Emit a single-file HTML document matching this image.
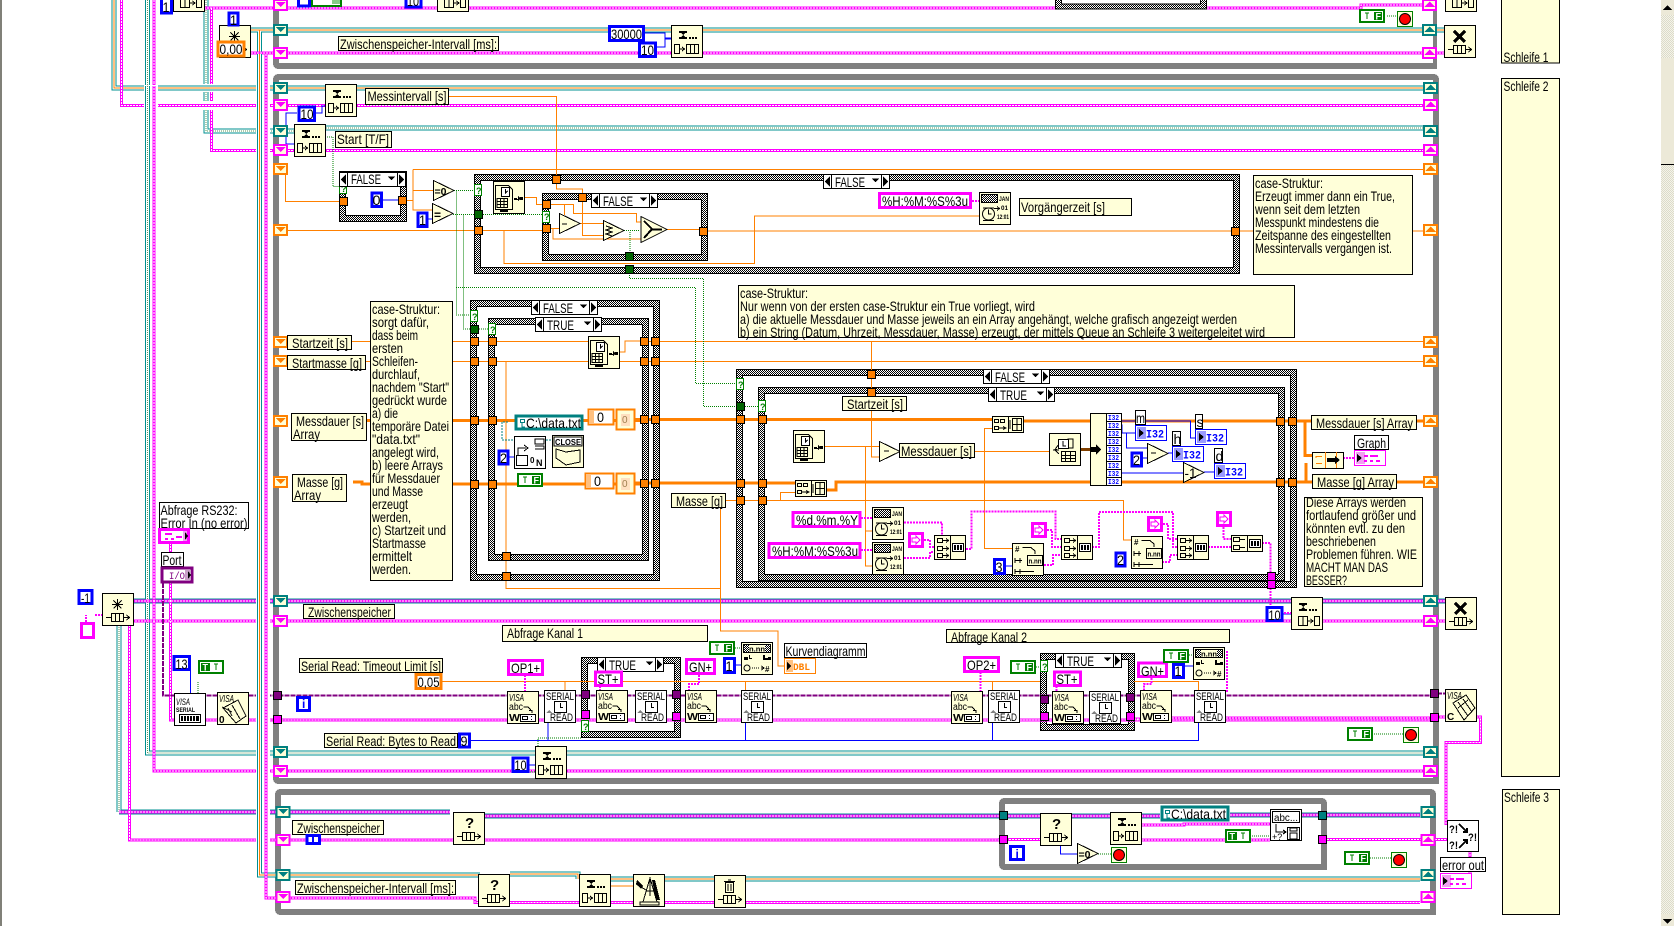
<!DOCTYPE html>
<html><head><meta charset="utf-8"><title>LabVIEW</title>
<style>
html,body{margin:0;padding:0;background:#fff;overflow:hidden}
svg{display:block;shape-rendering:crispEdges}
text{font:12px "Liberation Sans",sans-serif;fill:#000;stroke:none}
text:not([style]){font-size:14px;transform:translateY(1px)}
.y{fill:#ffffd9;stroke:#000}
.w{fill:#fff;stroke:#000}
.n{fill:none;stroke:#000}
.ho{fill:url(#h);stroke:#000}
.hi{fill:#fff;stroke:#000}
.cb{fill:#fff;stroke:#00f;stroke-width:3}
.cp{fill:#fff;stroke:#f0f;stroke-width:3}
.co{fill:#fff;stroke:#ff8000;stroke-width:3}
.ct{fill:#fff;stroke:#008080;stroke-width:3}
.wo{fill:none;stroke:#ff8000;stroke-width:1}
.wO{fill:none;stroke:#ff8000;stroke-width:3}
.wb{fill:none;stroke:#00f;stroke-width:1}
.wg{fill:none;stroke:#008000;stroke-width:1;stroke-dasharray:1 1}
.wu{fill:none;stroke:#800080;stroke-width:2;stroke-dasharray:5 1}
.wp{fill:none;stroke:#f0f;stroke-width:1;stroke-dasharray:2 1}
.fr{fill:#808080}
</style></head><body>
<svg xmlns="http://www.w3.org/2000/svg" width="1674" height="926" viewBox="0 0 1674 926">
<defs>
<pattern id="h" width="2" height="2" patternUnits="userSpaceOnUse"><rect width="2" height="2" fill="#fff"/><rect width="1" height="1" fill="#000"/><rect x="1" y="1" width="1" height="1" fill="#000"/></pattern>
<pattern id="sb" width="2" height="2" patternUnits="userSpaceOnUse"><rect width="2" height="2" fill="#f4f3ea"/><rect width="1" height="1" fill="#dcdbc8"/><rect x="1" y="1" width="1" height="1" fill="#dcdbc8"/></pattern>

<!-- wire geometry -->
<path id="P" fill="none" d="M198 8H1055M1207 8H1361V5H1423M251 53H1444M121.500 0V105.500H1423M154 0V771H1423M211.500 8V150.500H1423M266 54V898H475V902.500H1420M132 621H1445M129.500 625V840H1000V839.500H1040M170.500 543V720H1431M1437 717H1480.500V742.500H1446V825M1327 839.500H1447M1142 840H1270M1142 825H1184V824H1270M1470 851V873M678 720H1040M1134 719H1141M1172 718H1431"/>
<path id="TO" fill="none" d="M114 0V88H1423M250 30H1445M259.500 30V875H480M578 879V874H510M664 879H1420M610 879H634"/>
<path id="TD" fill="none" d="M147.500 0V753H1423M206 0V131H295M326 128H1423"/>
<path id="TP" fill="none" d="M132 601H1445M119 812H450M484 816H1000M1008 816H1040M1072 816H1160M1230 815H1270M1301 815H1318M1327 815H1420"/>
<path id="T" fill="none" d="M119 625V812"/>
<path id="VO" fill="none" d="M259.500 54V873"/>
<path id="VP" fill="none" d="M266 54V873M154 82V110"/>
<path id="VD" fill="none" d="M147.500 82V110"/>
<path id="HO" fill="none" d="M202 88H215"/>
<path id="HP" fill="none" d="M202 105.500H215"/>

<!-- structure pieces -->
<rect id="s" x=".5" y=".5" width="8" height="8" stroke="#000"/>
<g id="sd"><rect x="1" y="1" width="13" height="10" fill="#ffffd9" stroke="currentColor" stroke-width="2"/><path d="M2.500 3H12.500L7.500 8Z" fill="currentColor"/></g>
<g id="su"><rect x="1" y="1" width="13" height="10" fill="#ffffd9" stroke="currentColor" stroke-width="2"/><path d="M2 8H13L7.500 2.500Z" fill="currentColor"/></g>
<g id="sel"><rect x=".5" y=".5" width="66" height="14" class="w"/><path class="n" d="M8.500 0V14M58.500 0V14"/><path d="M1.500 7.500L7 2.500V12.500ZM65.500 7.500L60 2.500V12.500ZM49 4.500H56L52.500 8.500Z"/></g>
<path id="qm" fill="#fff" stroke="#008000" d="M.5 .5H7.500V11.500H.5Z"/>

<!-- common node art -->
<rect id="b" x=".5" y=".5" width="31" height="32" class="y"/>
<path id="ql" class="n" d="M4 24.500H9M9.500 20.500H21.500V28.500H9.500ZM13.500 20.500V28.500M17.500 20.500V28.500M21.500 24.500H27M24.500 22L27.500 24.500L24.500 27"/>
<g id="hg"><path fill="#000" d="M8 6H16V8H14L12 10L14 12H16V14H8V12H10L12 10L10 8H8Z"/><rect x="18" y="12" width="2" height="2"/><rect x="21" y="12" width="2" height="2"/><rect x="24" y="12" width="2" height="2"/></g>
<g id="qe"><use href="#b"/><use href="#hg"/><path class="n" d="M7.500 19.500H16.500V28.500H7.500ZM12 19.500V28.500M16.500 24H21.500M19.500 22L22 24L19.500 26M23.500 19.500H28.500V28.500H23.500Z"/></g>
<g id="qd"><use href="#b"/><use href="#hg"/><path class="n" d="M3.500 19.500H8.500V28.500H3.500ZM8.500 24H13M11 22L13.500 24L11 26M15.500 19.500H27.500V28.500H15.500ZM19.500 19.500V28.500M23.500 19.500V28.500"/></g>
<g id="qa"><use href="#b"/><use href="#ql"/><path fill="none" stroke="#000" stroke-width="1" d="M15.500 6V17M10 11.500H21M11.500 7.500L19.500 15.500M19.500 7.500L11.500 15.500"/></g>
<g id="qx"><use href="#b"/><use href="#ql"/><path fill="none" stroke="#000" stroke-width="3" d="M10 6L21 17M21 6L10 17"/></g>
<g id="qq"><use href="#b"/><use href="#ql"/><text x="12" y="16" style="font:bold 15px 'Liberation Sans',sans-serif">?</text></g>
<g id="qr"><use href="#b"/><use href="#ql"/><path class="n" d="M11.500 7.500H19.500V17.500H11.500ZM10 6.500H21M14 5H17M14 9V16M17 9V16"/></g>
<g id="clk"><use href="#b"/><path class="y" d="M2.500 4.500H15.500L19.500 8.500V28.500H2.500Z"/><path fill="#fff" stroke="#000" d="M8.500 6.500H16.500V15.500H8.500Z"/><path class="n" d="M12.500 8V12L14.500 10M4 17.500H14.500V26.500H4ZM7.500 17.500V26.500M11 17.500V26.500M4 20.500H14.500M4 23.500H14.500"/><path d="M7 29H15V31H7ZM21 17H24V18H25V15L28 17.500L25 20V19H21ZM27 16H30V19H27Z" fill="#000"/></g>
<g id="dt"><use href="#b"/><rect x="2.500" y="2.500" width="16" height="8" fill="url(#h)" stroke="#000"/><circle cx="9.500" cy="22" r="6" fill="#ffffd9" stroke="#000" style="shape-rendering:auto"/><path class="n" d="M9.500 17.500V22H12.500M4 16H15M4 28.500H15M15 16.500H20M18 14.500L20.500 16.500L18 18.500"/><text x="20" y="9" textLength="10" lengthAdjust="spacingAndGlyphs" style="font:bold 6px 'Liberation Sans',sans-serif">JAN</text><text x="22" y="18" textLength="7" lengthAdjust="spacingAndGlyphs" style="font:bold 6px 'Liberation Sans',sans-serif">01</text><text x="18" y="27" textLength="12" lengthAdjust="spacingAndGlyphs" style="font:bold 6px 'Liberation Sans',sans-serif">12:01</text></g>
<g id="ser"><rect x=".5" y=".5" width="31" height="32" class="w"/><text x="2" y="10" textLength="28" lengthAdjust="spacingAndGlyphs" style="font:11px 'Liberation Sans',sans-serif">SERIAL</text><text x="6" y="31" textLength="23" lengthAdjust="spacingAndGlyphs" style="font:11px 'Liberation Sans',sans-serif">READ</text><rect x="10.500" y="11.500" width="12" height="11" class="w"/><path class="n" d="M16.500 13V17.500H19M16.500 11V12M16.500 22V23"/><path fill="#808080" d="M2 23L5 20L8 23Z"/></g>
<g id="vw"><use href="#b"/><text x="2" y="10" textLength="15" lengthAdjust="spacingAndGlyphs" style="font:italic 10px 'Liberation Sans',sans-serif">VISA</text><text x="2" y="19" textLength="14" lengthAdjust="spacingAndGlyphs" style="font:10px 'Liberation Sans',sans-serif">abc</text><path class="n" d="M16.500 16H21L24 19M22 19.500H25V22"/><text x="2" y="30" textLength="11" lengthAdjust="spacingAndGlyphs" style="font:bold 10px 'Liberation Sans',sans-serif">W</text><rect x="13.500" y="23.500" width="15" height="7" class="w"/><path class="n" d="M15.500 25.500H20.500V28.500H15.500ZM24.500 25V26M24.500 28V29"/></g>
<g id="cc"><rect x=".5" y=".5" width="31" height="24" class="y"/><path class="n" d="M16.500 0V24M3.500 3.500H8.500V7.500H3.500ZM3.500 11.500H8.500V15.500H3.500ZM3.500 18.500H8.500V22.500H3.500ZM9 5.500H14M12 3.500L14.500 5.500L12 7.500M9 13.500H14M12 11.500L14.500 13.500L12 15.500M9 20.500H14M12 18.500L14.500 20.500L12 22.500"/><rect x="18.500" y="8.500" width="11" height="8" class="w"/><path d="M20 10H22V15H20ZM23 10H25V15H23ZM26 10H28V15H26Z"/></g>
<g id="ab"><rect x=".5" y=".5" width="31" height="16" class="y"/><path class="n" d="M16.500 0V16M2.500 3.500H6.500V6.500H2.500ZM8.500 3.500H12.500V6.500H8.500ZM2.500 10.500H6.500V13.500H2.500ZM7 12H13M11 10.500L14 12L11 13.500M20.500 2.500H29.500V14.500H20.500ZM25 2.500V14.500M20.500 8.500H29.500M18 4V13"/></g>
<g id="fn"><use href="#b"/><text x="3" y="9" style="font:bold 8px 'Liberation Sans',sans-serif">#</text><path class="n" d="M10.500 4.500H19L23 8V11M3 17.500H10M3 15V20M8 15V20M3 28.500H22M3 26V31M8 26V31"/><rect x="15.500" y="12.500" width="15" height="10" class="y"/><text x="16.500" y="20.500" textLength="13" lengthAdjust="spacingAndGlyphs" style="font:bold 7px 'Liberation Sans',sans-serif">n.nn</text></g>
<g id="ee"><use href="#b"/><rect x="2.500" y="2.500" width="27" height="8" fill="url(#h)" stroke="#000"/><rect x="8" y="3" width="16" height="7" fill="#ffffd9"/><text x="8" y="9.500" textLength="16" lengthAdjust="spacingAndGlyphs" style="font:bold 7px 'Liberation Sans',sans-serif">n.nn</text><path d="M3 15H7V18H3ZM8 13H9V16H11V17H8ZM22 13H24V16H27V15H30V18H22Z"/><circle cx="6" cy="26" r="3" fill="none" stroke="#000" style="shape-rendering:auto"/><path class="wg" style="stroke:#000" d="M11 26H19"/><path class="n" d="M20 26H22M20.500 24L23 26L20.500 28"/><text x="24" y="30" style="font:bold 8px 'Liberation Sans',sans-serif">#</text></g>
<g id="bf"><rect x="1" y="1" width="24" height="12" fill="#fff" stroke="#008000" stroke-width="2"/><rect x="15" y="3" width="8" height="8" fill="#008000"/><path class="n" style="stroke:#008000" d="M6 4H10M8 4V10"/><text x="16.500" y="10.500" style="font:bold 9px 'Liberation Sans',sans-serif;fill:#fff">F</text></g>
<g id="bt"><rect x="1" y="1" width="24" height="12" fill="#fff" stroke="#008000" stroke-width="2"/><rect x="3" y="3" width="9" height="8" fill="#008000"/><path class="n" style="stroke:#008000" d="M16 4H20M18 4V10"/><text x="4.500" y="10.500" style="font:bold 9px 'Liberation Sans',sans-serif;fill:#fff">T</text></g>
<g id="stop"><rect x=".5" y=".5" width="15" height="15" fill="#ffffd9" stroke="#008000"/><circle cx="8" cy="8" r="5.500" fill="#f00" stroke="#000" style="shape-rendering:auto"/></g>
<g id="i32"><rect x=".5" y=".5" width="31" height="15" fill="#fff" stroke="#00f"/><rect x="2" y="2" width="9" height="12" fill="#9a9aff"/><path d="M4 4L9 8L4 12Z"/><text x="11" y="12.500" textLength="18" lengthAdjust="spacingAndGlyphs" style="font:bold 11px 'Liberation Mono',monospace;fill:#00f">I32</text></g>
<g id="cl"><rect x=".5" y=".5" width="31" height="15" fill="#fff" stroke="#f0f"/><rect x="2" y="2" width="9" height="12" fill="#f0a0f0"/><path d="M3 4L8 8L3 12Z"/><path fill="#f0f" stroke="none" d="M10 5H14V7H10ZM16 5H24V7H16ZM10 10H13V12H10ZM16 10H19V12H16ZM22 10H26V12H22Z"/></g>
<g id="pb"><rect x="1.500" y="1.500" width="13" height="13" fill="#fff" stroke="#f0f" stroke-width="3"/><path fill="none" stroke="#f0f" d="M4 6H8V4L12 8L8 12V10H4Z"/></g>
<g id="tri"><path d="M.5 .5L21 10.500L.5 20.500Z" class="y"/></g>
</defs>

<rect width="1674" height="926" fill="#fff"/>
<rect x="0" y="0" width="2" height="926" fill="#808078"/>

<!-- while loop frames -->
<path class="fr" d="M273 0H279V63H1433V0H1437V69H279Q273 69 273 63Z"/>
<path class="fr" d="M279 74H1433Q1439 74 1439 80V784H279Q273 784 273 778V80Q273 74 279 74ZM279 80V778H1433V80Z" fill-rule="evenodd"/>
<path class="fr" d="M281 789H1430Q1436 789 1436 795V915H281Q275 915 275 909V795Q275 789 281 789ZM281 795V909H1430V795Z" fill-rule="evenodd"/>
<path class="fr" d="M1005 798H1321Q1327 798 1327 804V870H1005Q999 870 999 864V804Q999 798 1005 798ZM1005 804V864H1321V804Z" fill-rule="evenodd"/>

<!-- case structures -->
<rect class="ho" x="1055.500" y="-6" width="151" height="15"/><rect class="hi" x="1061.500" y="-8" width="139" height="12"/>
<rect class="ho" x="339.500" y="171.500" width="67" height="50"/><rect class="hi" x="345.500" y="186.500" width="55" height="29"/>
<rect class="ho" x="474.500" y="174.500" width="765" height="99"/><rect class="hi" x="480.500" y="180.500" width="753" height="87"/>
<rect class="ho" x="542.500" y="193.500" width="165" height="67"/><rect class="hi" x="548.500" y="199.500" width="153" height="55"/>
<rect class="ho" x="470.500" y="300.500" width="189" height="280"/><rect class="hi" x="476.500" y="306.500" width="177" height="268"/>
<rect class="ho" x="488.500" y="318.500" width="160" height="242"/><rect class="hi" x="494.500" y="324.500" width="148" height="230"/>
<rect class="ho" x="736.500" y="369.500" width="560" height="218"/><rect class="hi" x="742.500" y="375.500" width="548" height="206"/>
<rect class="ho" x="758.500" y="387.500" width="526" height="193"/><rect class="hi" x="764.500" y="393.500" width="514" height="181"/>
<rect class="ho" x="581.500" y="657.500" width="99" height="80"/><rect class="hi" x="587.500" y="663.500" width="87" height="68"/>
<rect class="ho" x="1040.500" y="653.500" width="94" height="77"/><rect class="hi" x="1046.500" y="659.500" width="82" height="65"/>

<!-- data wires: dotted bundles -->
<g stroke-width="5" stroke="#009090"><use href="#TO"/><use href="#TD"/><use href="#TP"/><use href="#T"/></g>
<g stroke-width="3" stroke="#fff"><use href="#TO"/><use href="#TD"/><use href="#T"/></g>
<g stroke-width="1" stroke="#ff8000"><use href="#TO"/></g>
<g stroke-width="1" stroke="#5a9a5a" stroke-dasharray="1 1"><use href="#TD"/><use href="#T"/></g>
<g stroke-width="3" stroke="#f0f"><use href="#P"/><use href="#TP"/></g>
<g stroke-width="1" stroke="#fff" stroke-dasharray="2 1"><use href="#P"/><use href="#TP"/></g>

<!-- purple VISA wire -->
<path class="wu" d="M163 583V695.500H1431M1437 693.500H1446"/>

<!-- wire crossing gaps -->
<rect x="256" y="56" width="14" height="816" fill="#fff"/>
<rect x="144" y="84" width="14" height="8" fill="#fff"/><rect x="144" y="101" width="14" height="9" fill="#fff"/>
<rect x="203" y="84" width="11" height="8" fill="#fff"/><rect x="203" y="101" width="11" height="9" fill="#fff"/>
<g stroke-width="5" stroke="#009090"><use href="#VO"/><use href="#VD"/><use href="#HO"/></g>
<g stroke-width="3" stroke="#fff"><use href="#VO"/><use href="#VD"/><use href="#HO"/></g>
<g stroke-width="1" stroke="#ff8000"><use href="#VO"/><use href="#HO"/></g>
<g stroke-width="1" stroke="#5a9a5a" stroke-dasharray="1 1"><use href="#VD"/></g>
<g stroke-width="3" stroke="#f0f"><use href="#VP"/><use href="#HP"/></g>
<g stroke-width="1" stroke="#fff" stroke-dasharray="2 1"><use href="#VP"/><use href="#HP"/></g>
<rect x="144" y="85" width="14" height="1" fill="#fff"/>

<!-- thin/thick orange -->
<path class="wO" d="M353 482H362V484H470M366 420.500H470M479 420.500H640M479 484H640M634 419.500H736M634 483H736M745 419.500H992M745 483H795M827 490H836V482H1090M1024 421H1090M1100 421H1276M1100 482H1276M1285 421H1311M1285 482H1312M1305 421V455.500H1312M1306 463V482M1417 421H1423M1397 482H1423"/>
<path class="wo" d="M285.500 170V201.500H339M407 200.500H413M413 169.500V210H432M413 190.500H433M413 169.500H1423M448 96.500H556.500V175M288 230.500H474M483 230.500H542M504 230.500V263.500H754.500V216H979M708 231H1231M1240 231H1423M352 341.500H470M366 361.500H470M479 341.500H488M479 361.500H488M497 341.500H588M497 361.500H640M506 361V588.500H720.500M720.500 508V631H778V666H816M619 352H625V341H640M649 341.500H1423M649 361.500H1423M871.500 341.500V457H879M824 446.500H879M865.500 446.500V566H872M865 531H872M974 451.500H1049M984.500 428.500V548.500H1012M992 428.500H984M726 500.500H1123.500V540H1131M780.500 500.500V492.500H795M442 681.500H1040M1134 681.500H1198.500V690M745.500 681.500V690M992.500 681.500V690M565 681.500V690M680 681.500H685M610 886H633"/>
<path class="wo" d="M556.500 182V189H582.500V193M582.500 201V235.500H603M525 197.500H536.500V204.500H542.500M550 204.500H573.500V213.500H636.500V222H641M564.500 204.500V215M550 228.500H559M553 228.500V239H641M580 223.500H603M667 229.500H699"/>

<!-- blue wires -->
<path class="wb" d="M316 113H322V106H326M297 113H286V144H294M286 144H296M382 200H398M428 219H433M509 457H514M190.500 671V693M470 740.500H1198.500V722M548 740V722M745.500 740V722M992.500 740V722M1060.500 845V854H1077M529 765H535M656 47H665V39H671M645 33H665V38H671M1006 566H1012M1106 421H1190.500V438H1195M1106 425H1122V433H1135M1106 433H1126.500V448H1147M1106 473H1183M1142 458H1147M1168 453H1172M1204 472H1214M736 665H741M1185 666H1193M1133 559H1131M1283 614H1291"/>

<!-- green dotted -->
<path class="wg" d="M325 137H333V186.500H339M454 190.500H474M456.500 190.500V315H470M453 214.500H542M463.500 214.500V329H488M456 287.500H695.500V383.500H736M629.500 273V278.500H703.500V406.500H736M745 406.500H758M630 232V252M624 230.500H640M1387 16H1397M1372 734H1403M1370 858H1391M1250 836H1270M1098 854H1111M1036 667H1040M735 648H741M1189 655H1193M530 772H538V738H581M198 682V693"/>

<!-- small pink dotted wires -->
<path class="wp" style="stroke-width:2" d="M95 615H102M86 622V615M861 518H872M861 550H872M904 522.500H942V535M904 558H930V552H934M924 540H930V547H934M966 549H971.500V511.500H1055.500V539H1061M1044 565H1053V555H1061M1047 530H1052V547H1061M1092 547H1099V512H1173V547H1177M1162 562H1170V555H1177M1163 524H1168V539H1177M1208 547H1231M1223.500 527V539H1231M1262 543H1270.500V573M1270.500 588V606M1266 613H1291M1343 458H1354M1227 651V692M525 675V691M699 675V684H689V690M980.500 672V691M1151.500 678V684H1144V690M600 686V690M1056.500 686V691M972 201H979"/>

<!-- SR terminals -->
<g>
<use href="#sd" x="273" y="-1" color="#f0f"/><use href="#sd" x="273" y="24" color="#008080"/><use href="#sd" x="273" y="47" color="#f0f"/>
<use href="#sd" x="273" y="82" color="#008080"/><use href="#sd" x="273" y="99" color="#f0f"/><use href="#sd" x="273" y="125" color="#008080"/><use href="#sd" x="273" y="144" color="#f0f"/><use href="#sd" x="273" y="163" color="#ff8000"/><use href="#sd" x="273" y="224" color="#ff8000"/><use href="#sd" x="273" y="336" color="#ff8000"/><use href="#sd" x="273" y="355" color="#ff8000"/><use href="#sd" x="273" y="415" color="#ff8000"/><use href="#sd" x="273" y="476" color="#ff8000"/><use href="#sd" x="273" y="595" color="#008080"/><use href="#sd" x="273" y="615" color="#f0f"/><use href="#sd" x="273" y="746" color="#008080"/><use href="#sd" x="273" y="765" color="#f0f"/>
<use href="#sd" x="275.500" y="806" color="#008080"/><use href="#sd" x="275.500" y="834" color="#f0f"/><use href="#sd" x="275.500" y="869" color="#008080"/><use href="#sd" x="275.500" y="891" color="#f0f"/>
<use href="#su" x="1422" y="-1" color="#f0f"/><use href="#su" x="1422" y="24" color="#008080"/><use href="#su" x="1422" y="47" color="#f0f"/>
<use href="#su" x="1423" y="82" color="#008080"/><use href="#su" x="1423" y="99" color="#f0f"/><use href="#su" x="1423" y="125" color="#008080"/><use href="#su" x="1423" y="144" color="#f0f"/><use href="#su" x="1423" y="163" color="#ff8000"/><use href="#su" x="1423" y="224" color="#ff8000"/><use href="#su" x="1423" y="336" color="#ff8000"/><use href="#su" x="1423" y="355" color="#ff8000"/><use href="#su" x="1423" y="415" color="#ff8000"/><use href="#su" x="1423" y="476" color="#ff8000"/><use href="#su" x="1423" y="595" color="#008080"/><use href="#su" x="1423" y="615" color="#f0f"/><use href="#su" x="1423" y="746" color="#008080"/><use href="#su" x="1423" y="765" color="#f0f"/>
<use href="#su" x="1420.500" y="806" color="#008080"/><use href="#su" x="1420.500" y="834" color="#f0f"/><use href="#su" x="1420.500" y="869" color="#008080"/><use href="#su" x="1420.500" y="891" color="#f0f"/>
</g>

<!-- square tunnels -->
<g fill="#ff8000">
<use href="#s" x="339" y="197"/><use href="#s" x="398" y="196"/><use href="#s" x="474" y="226"/><use href="#s" x="552" y="175"/><use href="#s" x="578" y="193"/><use href="#s" x="542" y="200"/><use href="#s" x="542" y="224"/><use href="#s" x="699" y="227"/><use href="#s" x="1231" y="227"/>
<use href="#s" x="470" y="337"/><use href="#s" x="470" y="357"/><use href="#s" x="470" y="416"/><use href="#s" x="470" y="480"/><use href="#s" x="488" y="337"/><use href="#s" x="488" y="357"/><use href="#s" x="488" y="416"/><use href="#s" x="488" y="480"/><use href="#s" x="502" y="552"/><use href="#s" x="502" y="572"/>
<use href="#s" x="640" y="337"/><use href="#s" x="640" y="357"/><use href="#s" x="640" y="415"/><use href="#s" x="640" y="479"/><use href="#s" x="651" y="337"/><use href="#s" x="651" y="357"/><use href="#s" x="651" y="415"/><use href="#s" x="651" y="479"/>
<use href="#s" x="867" y="370"/><use href="#s" x="867" y="388"/><use href="#s" x="736" y="415"/><use href="#s" x="736" y="479"/><use href="#s" x="736" y="496"/><use href="#s" x="758" y="415"/><use href="#s" x="758" y="479"/><use href="#s" x="758" y="496"/>
<use href="#s" x="1276" y="417"/><use href="#s" x="1276" y="478"/><use href="#s" x="1288" y="417"/><use href="#s" x="1288" y="478"/>
</g>
<g fill="#006400"><use href="#s" x="474" y="210"/><use href="#s" x="625" y="252"/><use href="#s" x="625" y="265"/><use href="#s" x="470" y="325"/><use href="#s" x="736" y="402"/></g>
<g fill="#800080"><use href="#s" x="273" y="691"/><use href="#s" x="1430" y="689"/><use href="#s" x="581" y="690"/><use href="#s" x="672" y="690"/><use href="#s" x="1040" y="695"/><use href="#s" x="1126" y="693"/></g>
<g fill="#f0f"><use href="#s" x="273" y="715"/><use href="#s" x="1430" y="713"/><use href="#s" x="581" y="710"/><use href="#s" x="672" y="712"/><use href="#s" x="1040" y="712"/><use href="#s" x="1126" y="712"/><use href="#s" x="1267" y="572"/><use href="#s" x="1267" y="580"/><use href="#s" x="999" y="835"/><use href="#s" x="1318" y="835"/></g>
<g fill="#008080"><use href="#s" x="999" y="811"/><use href="#s" x="1318" y="811"/></g>
<!-- selector terminals -->
<use href="#qm" x="339" y="182"/><use href="#qm" x="474" y="184"/><use href="#qm" x="542" y="211"/><use href="#qm" x="470" y="310"/><use href="#qm" x="488" y="323"/><use href="#qm" x="736" y="378"/><use href="#qm" x="758" y="400"/><use href="#qm" x="581" y="720"/><use href="#qm" x="1040" y="660"/>
<g style="font:9px 'Liberation Sans',sans-serif;"><text x="341" y="192" style="font:bold 9px 'Liberation Sans',sans-serif;fill:#008000">?</text><text x="476" y="194" style="font:bold 9px 'Liberation Sans',sans-serif;fill:#008000">?</text><text x="544" y="220" style="font:bold 9px 'Liberation Sans',sans-serif;fill:#008000">?</text><text x="472" y="320" style="font:bold 9px 'Liberation Sans',sans-serif;fill:#008000">?</text><text x="490" y="333" style="font:bold 9px 'Liberation Sans',sans-serif;fill:#008000">?</text><text x="738" y="388" style="font:bold 9px 'Liberation Sans',sans-serif;fill:#008000">?</text><text x="760" y="410" style="font:bold 9px 'Liberation Sans',sans-serif;fill:#008000">?</text><text x="583" y="730" style="font:bold 9px 'Liberation Sans',sans-serif;fill:#008000">?</text><text x="1042" y="670" style="font:bold 9px 'Liberation Sans',sans-serif;fill:#008000">?</text></g>

<!-- selectors -->
<use href="#sel" x="339" y="172"/><text x="351" y="183" textLength="30" lengthAdjust="spacingAndGlyphs">FALSE</text>
<use href="#sel" x="823" y="174"/><text x="835" y="186" textLength="30" lengthAdjust="spacingAndGlyphs">FALSE</text>
<use href="#sel" x="591" y="193"/><text x="603" y="205" textLength="30" lengthAdjust="spacingAndGlyphs">FALSE</text>
<use href="#sel" x="531" y="300"/><text x="543" y="312" textLength="30" lengthAdjust="spacingAndGlyphs">FALSE</text>
<use href="#sel" x="535" y="317"/><text x="547" y="329" textLength="27" lengthAdjust="spacingAndGlyphs">TRUE</text>
<use href="#sel" x="983" y="369"/><text x="995" y="381" textLength="30" lengthAdjust="spacingAndGlyphs">FALSE</text>
<use href="#sel" x="988" y="387"/><text x="1000" y="399" textLength="27" lengthAdjust="spacingAndGlyphs">TRUE</text>
<use href="#sel" x="597" y="657"/><text x="609" y="669" textLength="27" lengthAdjust="spacingAndGlyphs">TRUE</text>
<use href="#sel" x="1055" y="653"/><text x="1067" y="665" textLength="27" lengthAdjust="spacingAndGlyphs">TRUE</text>

<!-- top strip nodes -->
<use href="#qe" x="173" y="-21"/>
<rect class="cb" x="161.500" y="-3" width="10" height="16"/><text x="162.500" y="11" textLength="7" lengthAdjust="spacingAndGlyphs">1</text>
<use href="#qe" x="437" y="-21"/>
<rect class="cb" x="406" y="-8" width="15" height="15"/><text x="407" y="5" textLength="12" lengthAdjust="spacingAndGlyphs">10</text>
<rect class="cb" x="298.500" y="-5" width="11" height="11"/>
<rect x="312" y="-6" width="29" height="12" fill="#fff" stroke="#008000" stroke-width="2"/><rect x="332" y="-4" width="8" height="8" fill="#8c8"/>
<use href="#qa" x="219" y="25"/>
<rect class="cb" x="229" y="13" width="9" height="12"/><text x="230" y="24" textLength="7" lengthAdjust="spacingAndGlyphs">1</text>
<rect class="co" x="218" y="42" width="26" height="14"/><text x="219.500" y="53" textLength="23" lengthAdjust="spacingAndGlyphs">0,00</text>
<rect class="y" x="338.500" y="36.500" width="160" height="14"/><text x="340" y="48" textLength="157" lengthAdjust="spacingAndGlyphs">Zwischenspeicher-Intervall [ms]:</text>
<use href="#qd" x="671" y="25"/>
<rect class="cb" x="609.500" y="26.500" width="34" height="14"/><text x="611" y="38" textLength="31" lengthAdjust="spacingAndGlyphs">30000</text>
<rect class="cb" x="639.500" y="43" width="16" height="13.500"/><text x="641" y="54" textLength="13" lengthAdjust="spacingAndGlyphs">10</text>
<use href="#bf" x="1359" y="9"/><use href="#stop" x="1397" y="11"/>
<use href="#qe" x="1445" y="-21"/><use href="#qx" x="1444" y="25"/>

<!-- loop 2 upper nodes -->
<use href="#qd" x="325" y="84"/>
<rect class="y" x="365.500" y="88.500" width="83" height="16"/><text x="367.500" y="100" textLength="79" lengthAdjust="spacingAndGlyphs">Messintervall [s]</text>
<rect class="cb" x="299" y="107" width="15.500" height="13.500"/><text x="300.500" y="118" textLength="13" lengthAdjust="spacingAndGlyphs">10</text>
<use href="#qd" x="294" y="124"/>
<rect class="y" x="335.500" y="131.500" width="56" height="16"/><text x="337" y="143" textLength="52" lengthAdjust="spacingAndGlyphs">Start [T/F]</text>
<rect class="cb" x="372" y="193" width="9.500" height="13.500"/><text x="372.500" y="204" textLength="8" lengthAdjust="spacingAndGlyphs">0</text>
<use href="#tri" x="433" y="180"/><text x="434.500" y="195" style="font:bold 10px 'Liberation Sans',sans-serif" textLength="12" lengthAdjust="spacingAndGlyphs">=0</text>
<use href="#tri" x="432" y="203"/><text x="434" y="219" style="font:bold 12px 'Liberation Sans',sans-serif">=</text>
<rect class="cb" x="418" y="213" width="9" height="13.500"/><text x="419" y="224" textLength="7" lengthAdjust="spacingAndGlyphs">1</text>
<use href="#clk" x="493" y="181"/>
<use href="#tri" x="559" y="213"/><path class="n" d="M562 224H567"/>
<use href="#tri" x="603" y="220"/><path class="n" d="M606 226L612 228L606 230L612 232L606 234L612 236"/>
<path class="y" d="M641 216.500L667 229.500L641 242.500Z"/><path fill="none" stroke="#000" stroke-width="2" d="M644 221L652 229L644 238M652 229.500H662"/>
<rect class="cp" x="879.500" y="193.500" width="91" height="14"/><text x="882" y="205" textLength="86" lengthAdjust="spacingAndGlyphs">%H:%M:%S%3u</text>
<use href="#dt" x="979" y="192"/>
<rect class="y" x="1019.500" y="198.500" width="112" height="17"/><text x="1021" y="211" textLength="84" lengthAdjust="spacingAndGlyphs">Vorgängerzeit [s]</text>

<!-- notes -->
<rect class="y" x="1253.500" y="175.500" width="159" height="99"/>
<g><text x="1255" y="187" textLength="68" lengthAdjust="spacingAndGlyphs">case-Struktur:</text><text x="1255" y="200" textLength="140" lengthAdjust="spacingAndGlyphs">Erzeugt immer dann ein True,</text><text x="1255" y="213" textLength="105" lengthAdjust="spacingAndGlyphs">wenn seit dem letzten</text><text x="1255" y="226" textLength="124" lengthAdjust="spacingAndGlyphs">Messpunkt mindestens die</text><text x="1255" y="239" textLength="136" lengthAdjust="spacingAndGlyphs">Zeitspanne des eingestellten</text><text x="1255" y="252" textLength="137" lengthAdjust="spacingAndGlyphs">Messintervalls vergangen ist.</text></g>
<rect class="y" x="738.500" y="285.500" width="556" height="52"/>
<g><text x="740" y="297" textLength="68" lengthAdjust="spacingAndGlyphs">case-Struktur:</text><text x="740" y="310" textLength="295" lengthAdjust="spacingAndGlyphs">Nur wenn von der ersten case-Struktur ein True vorliegt, wird</text><text x="740" y="323" textLength="497" lengthAdjust="spacingAndGlyphs">a) die aktuelle Messdauer und Masse jeweils an ein Array angehängt, welche grafisch angezeigt werden</text><text x="740" y="336" textLength="525" lengthAdjust="spacingAndGlyphs">b) ein String (Datum, Uhrzeit, Messdauer, Masse) erzeugt, der mittels Queue an Schleife 3 weitergeleitet wird</text></g>
<rect class="y" x="370.500" y="301.500" width="82" height="279"/>
<g><text x="372" y="313" textLength="68" lengthAdjust="spacingAndGlyphs">case-Struktur:</text><text x="372" y="326" textLength="57" lengthAdjust="spacingAndGlyphs">sorgt dafür,</text><text x="372" y="339" textLength="46" lengthAdjust="spacingAndGlyphs">dass beim</text><text x="372" y="352" textLength="31" lengthAdjust="spacingAndGlyphs">ersten</text><text x="372" y="365" textLength="46" lengthAdjust="spacingAndGlyphs">Schleifen-</text><text x="372" y="378" textLength="48" lengthAdjust="spacingAndGlyphs">durchlauf,</text><text x="372" y="391" textLength="77" lengthAdjust="spacingAndGlyphs">nachdem "Start"</text><text x="372" y="404" textLength="75" lengthAdjust="spacingAndGlyphs">gedrückt wurde</text><text x="372" y="417" textLength="26" lengthAdjust="spacingAndGlyphs">a) die</text><text x="372" y="430" textLength="77" lengthAdjust="spacingAndGlyphs">temporäre Datei</text><text x="372" y="443" textLength="48" lengthAdjust="spacingAndGlyphs">"data.txt"</text><text x="372" y="456" textLength="67" lengthAdjust="spacingAndGlyphs">angelegt wird,</text><text x="372" y="469" textLength="71" lengthAdjust="spacingAndGlyphs">b) leere Arrays</text><text x="372" y="482" textLength="68" lengthAdjust="spacingAndGlyphs">für Messdauer</text><text x="372" y="495" textLength="51" lengthAdjust="spacingAndGlyphs">und Masse</text><text x="372" y="508" textLength="36" lengthAdjust="spacingAndGlyphs">erzeugt</text><text x="372" y="521" textLength="39" lengthAdjust="spacingAndGlyphs">werden,</text><text x="372" y="534" textLength="74" lengthAdjust="spacingAndGlyphs">c) Startzeit und</text><text x="372" y="547" textLength="54" lengthAdjust="spacingAndGlyphs">Startmasse</text><text x="372" y="560" textLength="40" lengthAdjust="spacingAndGlyphs">ermittelt</text><text x="372" y="573" textLength="39" lengthAdjust="spacingAndGlyphs">werden.</text></g>
<rect class="y" x="1304.500" y="497.500" width="118" height="89"/>
<g><text x="1306" y="506" textLength="100" lengthAdjust="spacingAndGlyphs">Diese Arrays werden</text><text x="1306" y="519" textLength="110" lengthAdjust="spacingAndGlyphs">fortlaufend größer und</text><text x="1306" y="532" textLength="99" lengthAdjust="spacingAndGlyphs">könnten evtl. zu den</text><text x="1306" y="545" textLength="70" lengthAdjust="spacingAndGlyphs">beschriebenen</text><text x="1306" y="558" textLength="111" lengthAdjust="spacingAndGlyphs">Problemen führen. WIE</text><text x="1306" y="571" textLength="82" lengthAdjust="spacingAndGlyphs">MACHT MAN DAS</text><text x="1306" y="584" textLength="41" lengthAdjust="spacingAndGlyphs">BESSER?</text></g>

<!-- left cluster labels -->
<rect class="y" x="287.500" y="335.500" width="64" height="14"/><text x="292" y="347" textLength="56" lengthAdjust="spacingAndGlyphs">Startzeit [s]</text>
<rect class="y" x="287.500" y="355.500" width="78" height="14"/><text x="292" y="367" textLength="70" lengthAdjust="spacingAndGlyphs">Startmasse [g]</text>
<rect class="y" x="291.500" y="413.500" width="75" height="27"/><text x="296" y="425" textLength="68" lengthAdjust="spacingAndGlyphs">Messdauer [s]</text><text x="293" y="438" textLength="27" lengthAdjust="spacingAndGlyphs">Array</text>
<rect class="y" x="292.500" y="474.500" width="54" height="27"/><text x="297" y="486" textLength="46" lengthAdjust="spacingAndGlyphs">Masse [g]</text><text x="294" y="499" textLength="27" lengthAdjust="spacingAndGlyphs">Array</text>
<rect class="y" x="303.500" y="604.500" width="91" height="14"/><text x="308" y="616" textLength="83" lengthAdjust="spacingAndGlyphs">Zwischenspeicher</text>
<rect class="w" x="159.500" y="502.500" width="89" height="26"/><text x="160.500" y="514" textLength="77" lengthAdjust="spacingAndGlyphs">Abfrage RS232:</text><text x="160.500" y="527" textLength="87" lengthAdjust="spacingAndGlyphs">Error In (no error)</text>
<rect x="159.500" y="529.500" width="29" height="13" fill="#fff" stroke="#f0f" stroke-width="3"/><rect x="183" y="531" width="4" height="10" fill="#f0a0f0"/><path d="M185 532L188 536L185 540Z"/><path fill="#f0f" d="M165 533H172V535H165ZM165 538H168V540H165ZM171 538H174V540H171ZM176 536H182V538H176Z"/>
<rect class="w" x="161.500" y="552.500" width="22" height="14"/><text x="162.500" y="564" textLength="19" lengthAdjust="spacingAndGlyphs">Port</text>
<rect x="162" y="568" width="30" height="14" fill="#fff" stroke="#800080" stroke-width="3"/><text x="169" y="579" textLength="16" lengthAdjust="spacingAndGlyphs" style="font:10px 'Liberation Mono',monospace;fill:#800080">I/O</text><rect x="185" y="570" width="6" height="10" fill="#c9a0c9"/><path d="M188 571L191 575L188 579Z"/>
<rect class="cb" x="79" y="590.500" width="13" height="13"/><text x="81" y="602" textLength="9" lengthAdjust="spacingAndGlyphs">-1</text>
<use href="#qa" x="102" y="593"/>
<rect class="cp" x="81.500" y="623.500" width="12" height="14"/>
<rect class="cb" x="174" y="656.500" width="15.500" height="13"/><text x="175.500" y="668" textLength="12" lengthAdjust="spacingAndGlyphs">13</text>
<use href="#bt" x="198" y="660"/>
<rect x=".5" y=".5" width="31" height="32" class="w" transform="translate(174 693)"/><text x="176" y="705" textLength="14" lengthAdjust="spacingAndGlyphs" style="font:italic 9px 'Liberation Sans',sans-serif">VISA</text><text x="176" y="712" textLength="19" lengthAdjust="spacingAndGlyphs" style="font:bold 6px 'Liberation Sans',sans-serif">SERIAL</text><rect x="179.500" y="714.500" width="21" height="8" fill="#fff" stroke="#000"/><path d="M181 716H183V721H181ZM184 716H186V721H184ZM187 716H189V721H187ZM190 716H192V721H190ZM193 716H195V721H193ZM196 716H199V721H196Z"/>
<use href="#b" x="217" y="692"/><text x="219" y="702" textLength="15" lengthAdjust="spacingAndGlyphs" style="font:italic 10px 'Liberation Sans',sans-serif">VISA</text><text x="219" y="723" style="font:bold 10px 'Liberation Sans',sans-serif">0</text><path class="n" d="M223 708L238 700L246 716L236 723ZM228 708L232 716M232 705L240 719M222 707L232 712"/>

<!-- inner case 2 content -->
<use href="#clk" x="588" y="336"/>
<rect class="ct" x="516" y="416" width="66" height="13"/><path class="n" style="stroke:#008080" d="M520.500 419.500H524.500V422.500H520.500ZM522 423V427H525"/><text x="526" y="427" textLength="55" lengthAdjust="spacingAndGlyphs">C:\data.txt</text>
<path fill="none" stroke="#008080" stroke-dasharray="2 1" d="M508 422H502V440H514M546 440H552"/>
<rect x=".5" y=".5" width="31" height="32" class="w" transform="translate(514 436)"/><path class="n" d="M518 456V448H526M524 445L528 448L524 451M516.500 455.500H527.500V465.500H516.500ZM535 439H544V444H535ZM535 446H544V449H535"/><text x="530" y="463" style="font:bold 8px 'Liberation Sans',sans-serif">0</text><text x="536" y="466" style="font:bold 9px 'Liberation Sans',sans-serif">N</text>
<rect class="cb" x="499" y="451" width="9" height="13"/><text x="500" y="462" textLength="7" lengthAdjust="spacingAndGlyphs">2</text>
<use href="#bf" x="517" y="473"/>
<use href="#b" x="552" y="435"/><rect x="554" y="437" width="28" height="9" fill="#fff" stroke="#000"/><text x="555" y="445" textLength="26" lengthAdjust="spacingAndGlyphs" style="font:bold 8px 'Liberation Sans',sans-serif">CLOSE</text><path class="n" d="M556 449L566 452L580 450V462L566 465L556 458Z"/>
<rect x="588.500" y="409.500" width="25" height="15" fill="#fff" stroke="#ff8000" stroke-width="2"/><rect x="589" y="410" width="5" height="14" fill="#ffc080"/><text x="597" y="421" textLength="7" lengthAdjust="spacingAndGlyphs">0</text>
<rect x="616.500" y="409.500" width="18" height="20" fill="#ffffd9" stroke="#ff8000" stroke-width="2"/><rect x="621" y="414" width="9" height="12" fill="#ffe0c0"/><text x="622" y="423" style="font:10px 'Liberation Sans',sans-serif;fill:#a08050">0</text>
<rect x="585.500" y="473.500" width="28" height="15" fill="#fff" stroke="#ff8000" stroke-width="2"/><rect x="586" y="474" width="5" height="14" fill="#ffc080"/><text x="594" y="485" textLength="7" lengthAdjust="spacingAndGlyphs">0</text>
<rect x="616.500" y="473.500" width="18" height="20" fill="#ffffd9" stroke="#ff8000" stroke-width="2"/><rect x="621" y="478" width="9" height="12" fill="#ffe0c0"/><text x="622" y="487" style="font:10px 'Liberation Sans',sans-serif;fill:#a08050">0</text>

<!-- big case content -->
<rect class="y" x="671.500" y="493.500" width="54" height="14"/><text x="676" y="505" textLength="47" lengthAdjust="spacingAndGlyphs">Masse [g]</text>
<rect class="y" x="842.500" y="396.500" width="64" height="14"/><text x="847" y="408" textLength="56" lengthAdjust="spacingAndGlyphs">Startzeit [s]</text>
<use href="#clk" x="793" y="430"/>
<use href="#tri" x="879" y="441"/><path class="n" d="M884 451H889"/>
<rect class="y" x="899.500" y="443.500" width="75" height="14"/><text x="901" y="455" textLength="71" lengthAdjust="spacingAndGlyphs">Messdauer [s]</text>
<use href="#ab" x="992" y="416"/><use href="#ab" x="795" y="480"/>
<use href="#b" x="1049" y="433"/><path class="n" d="M1059 450L1055 449.500L1059 444M1059 454L1055 450M1058 450H1053M1068 439H1073V448H1068Z"/><rect x="1058.500" y="439.500" width="10" height="9" class="w"/><path class="n" d="M1061.500 451.500H1075.500V461.500H1061.500ZM1065.500 451.500V461.500M1070.500 451.500V461.500M1061.500 455.500H1075.500M1061.500 458.500H1075.500M1063 441V446H1066"/>
<path d="M1081 448H1091V451H1081Z" fill="#804000"/><path d="M1091 447H1096V444L1101 449.500L1096 455V452H1091Z"/>
<rect class="y" x="1090.500" y="413.500" width="16" height="72"/>
<path d="M1091 447H1096V444L1101 449.500L1096 455V452H1091Z"/>
<g><rect x="1106.500" y="413.500" width="15" height="72" class="w"/><path class="n" d="M1106 421.500H1122M1106 429.500H1122M1106 437.500H1122M1106 445.500H1122M1106 453.500H1122M1106 461.500H1122M1106 469.500H1122M1106 477.500H1122"/>
<text x="1108" y="420" textLength="11" lengthAdjust="spacingAndGlyphs" style="font:bold 7px 'Liberation Mono',monospace;fill:#00f">I32</text><text x="1108" y="428" textLength="11" lengthAdjust="spacingAndGlyphs" style="font:bold 7px 'Liberation Mono',monospace;fill:#00f">I32</text><text x="1108" y="436" textLength="11" lengthAdjust="spacingAndGlyphs" style="font:bold 7px 'Liberation Mono',monospace;fill:#00f">I32</text><text x="1108" y="444" textLength="11" lengthAdjust="spacingAndGlyphs" style="font:bold 7px 'Liberation Mono',monospace;fill:#00f">I32</text><text x="1108" y="452" textLength="11" lengthAdjust="spacingAndGlyphs" style="font:bold 7px 'Liberation Mono',monospace;fill:#00f">I32</text><text x="1108" y="460" textLength="11" lengthAdjust="spacingAndGlyphs" style="font:bold 7px 'Liberation Mono',monospace;fill:#00f">I32</text><text x="1108" y="468" textLength="11" lengthAdjust="spacingAndGlyphs" style="font:bold 7px 'Liberation Mono',monospace;fill:#00f">I32</text><text x="1108" y="476" textLength="11" lengthAdjust="spacingAndGlyphs" style="font:bold 7px 'Liberation Mono',monospace;fill:#00f">I32</text><text x="1108" y="484" textLength="11" lengthAdjust="spacingAndGlyphs" style="font:bold 7px 'Liberation Mono',monospace;fill:#00f">I32</text></g>
<rect class="w" x="1135.500" y="410.500" width="10" height="14"/><text x="1136" y="422" textLength="9" lengthAdjust="spacingAndGlyphs">m</text>
<use href="#i32" x="1135" y="425"/>
<rect class="w" x="1195.500" y="414.500" width="7" height="14"/><text x="1196.500" y="426">s</text>
<use href="#i32" x="1195" y="429"/>
<rect class="w" x="1172.500" y="431.500" width="8" height="14"/><text x="1173.500" y="443">h</text>
<use href="#i32" x="1172" y="446"/>
<rect class="w" x="1214.500" y="448.500" width="8" height="14"/><text x="1215.500" y="460">d</text>
<use href="#i32" x="1214" y="463"/>
<rect class="cb" x="1132" y="453" width="9.500" height="13"/><text x="1133" y="464" textLength="7" lengthAdjust="spacingAndGlyphs">2</text>
<use href="#tri" x="1147" y="443"/><path class="n" d="M1151 453H1156"/>
<use href="#tri" x="1183" y="462"/><text x="1184.500" y="477" textLength="12" lengthAdjust="spacingAndGlyphs">-1</text>
<rect class="cp" x="793" y="512.500" width="67" height="14"/><text x="796" y="524" textLength="62" lengthAdjust="spacingAndGlyphs">%d.%m.%Y</text>
<rect class="cp" x="769" y="543.500" width="91" height="14"/><text x="772" y="555" textLength="86" lengthAdjust="spacingAndGlyphs">%H:%M:%S%3u</text>
<use href="#dt" x="872" y="507"/><use href="#dt" x="872" y="542"/>
<use href="#pb" x="908" y="532"/><use href="#cc" x="934" y="535"/>
<use href="#pb" x="1031" y="522"/><use href="#cc" x="1061" y="535"/>
<use href="#fn" x="1012" y="543"/><rect class="cb" x="994.500" y="559.500" width="10" height="14"/><text x="995.500" y="571" textLength="7" lengthAdjust="spacingAndGlyphs">3</text>
<use href="#fn" x="1131" y="536"/><rect class="cb" x="1116" y="553" width="9" height="13"/><text x="1117" y="564" textLength="7" lengthAdjust="spacingAndGlyphs">2</text>
<use href="#pb" x="1147" y="516"/><use href="#cc" x="1177" y="535"/>
<use href="#pb" x="1216" y="511"/>
<g transform="translate(1231 535)"><rect x=".5" y=".5" width="31" height="16" class="y"/><path class="n" d="M16.500 0V16M2.500 2.500H8.500V6.500H2.500ZM2.500 10.500H8.500V14.500H2.500ZM9 4.500H14M9 12.500H14"/><rect x="18.500" y="4.500" width="11" height="8" class="w"/><path d="M20 6H22V11H20ZM23 6H25V11H23ZM26 6H28V11H26Z"/></g>
<rect class="y" x="1311.500" y="415.500" width="105" height="14"/><text x="1316" y="427" textLength="97" lengthAdjust="spacingAndGlyphs">Messdauer [s] Array</text>
<rect class="y" x="1312.500" y="474.500" width="84" height="14"/><text x="1317" y="486" textLength="77" lengthAdjust="spacingAndGlyphs">Masse [g] Array</text>
<rect class="y" x="1312.500" y="452.500" width="31" height="16"/><path class="n" d="M1325.500 452V468M1336.500 452V468M1316 456.500H1319M1316 456V458M1322 456.500H1319M1316 463.500H1322" style="stroke:#ff8000"/><path d="M1327 458H1335V456L1340 460L1335 464V462H1327Z"/>
<rect class="w" x="1354.500" y="435.500" width="34" height="14"/><text x="1357" y="447" textLength="29" lengthAdjust="spacingAndGlyphs">Graph</text>
<use href="#cl" x="1354" y="450"/>
<rect class="cb" x="1267" y="607.500" width="15" height="13"/><text x="1268.500" y="619" textLength="12" lengthAdjust="spacingAndGlyphs">10</text>
<use href="#qe" x="1291" y="597"/><use href="#qx" x="1445" y="597"/>

<!-- acquisition row -->
<rect class="y" x="502.500" y="625.500" width="205" height="16"/><text x="507" y="637" textLength="76" lengthAdjust="spacingAndGlyphs">Abfrage Kanal 1</text>
<rect class="y" x="946.500" y="629.500" width="283" height="13"/><text x="951" y="641" textLength="76" lengthAdjust="spacingAndGlyphs">Abfrage Kanal 2</text>
<rect class="y" x="299.500" y="658.500" width="143" height="14"/><text x="301" y="670" textLength="140" lengthAdjust="spacingAndGlyphs">Serial Read: Timeout Limit [s]</text>
<rect class="co" x="416" y="674.500" width="25" height="14"/><text x="417.500" y="686" textLength="22" lengthAdjust="spacingAndGlyphs">0,05</text>
<rect class="cb" x="297.500" y="697.500" width="12" height="13"/><text x="302" y="708" style="font:bold 12px 'Liberation Sans',sans-serif;fill:#00f">i</text>
<rect class="cp" x="508.500" y="660.500" width="34" height="14"/><text x="511" y="672" textLength="29" lengthAdjust="spacingAndGlyphs">OP1+</text>
<use href="#vw" x="507" y="691"/><use href="#ser" x="544" y="690"/>
<rect class="y" x="324.500" y="733.500" width="133" height="14"/><text x="326" y="745" textLength="130" lengthAdjust="spacingAndGlyphs">Serial Read: Bytes to Read</text>
<rect class="cb" x="459.500" y="734" width="10" height="13"/><text x="460.500" y="745" textLength="7" lengthAdjust="spacingAndGlyphs">9</text>
<use href="#qd" x="535" y="746"/>
<rect class="cb" x="513" y="758" width="15" height="13.500"/><text x="514.500" y="769" textLength="12" lengthAdjust="spacingAndGlyphs">10</text>
<rect class="cp" x="595.500" y="672" width="26" height="13.500"/><text x="597.500" y="683" textLength="21" lengthAdjust="spacingAndGlyphs">ST+</text>
<use href="#vw" x="596" y="690"/><use href="#ser" x="635" y="690"/>
<rect class="cp" x="686.500" y="659.500" width="28" height="14"/><text x="689" y="671" textLength="23" lengthAdjust="spacingAndGlyphs">GN+</text>
<use href="#vw" x="685" y="690"/><use href="#ser" x="741" y="690"/>
<use href="#bf" x="709" y="641"/>
<rect class="cb" x="724.500" y="658.500" width="10" height="14"/><text x="725.500" y="670" textLength="7" lengthAdjust="spacingAndGlyphs">1</text>
<use href="#ee" x="741" y="642"/>
<rect class="w" x="784.500" y="643.500" width="82" height="14"/><text x="785.500" y="655" textLength="80" lengthAdjust="spacingAndGlyphs">Kurvendiagramm</text>
<rect x="784.500" y="658.500" width="31" height="15" fill="#fff" stroke="#ff8000"/><rect x="786" y="660" width="7" height="12" fill="#ffc080"/><path d="M787 662L791 666L787 670Z"/><text x="793" y="670" textLength="17" lengthAdjust="spacingAndGlyphs" style="font:bold 10px 'Liberation Mono',monospace;fill:#ff8000">DBL</text>
<rect class="cp" x="964.500" y="657.500" width="34" height="14"/><text x="967" y="669" textLength="29" lengthAdjust="spacingAndGlyphs">OP2+</text>
<use href="#bf" x="1010" y="660"/>
<use href="#vw" x="951" y="691"/><use href="#ser" x="988" y="690"/>
<rect class="cp" x="1054.500" y="672" width="26" height="13.500"/><text x="1056.500" y="683" textLength="21" lengthAdjust="spacingAndGlyphs">ST+</text>
<use href="#vw" x="1052" y="691"/><use href="#ser" x="1089" y="691"/>
<rect class="cp" x="1138.500" y="663" width="28" height="13.500"/><text x="1141" y="675" textLength="23" lengthAdjust="spacingAndGlyphs">GN+</text>
<use href="#bf" x="1163" y="649"/>
<rect class="cb" x="1173.500" y="664.500" width="10" height="13"/><text x="1174.500" y="675" textLength="7" lengthAdjust="spacingAndGlyphs">1</text>
<use href="#ee" x="1193" y="647"/>
<use href="#vw" x="1140" y="690"/><use href="#ser" x="1194" y="690"/>
<use href="#b" x="1445" y="689"/><text x="1447" y="699" textLength="15" lengthAdjust="spacingAndGlyphs" style="font:italic 10px 'Liberation Sans',sans-serif">VISA</text><text x="1447" y="720" style="font:bold 10px 'Liberation Sans',sans-serif">C</text><path class="n" d="M1453 703L1466 695L1475 708L1464 720ZM1458 702L1468 716M1463 699L1472 712M1458 708L1468 700"/>
<use href="#bf" x="1347" y="727"/><use href="#stop" x="1403" y="727"/>

<!-- loop 3 -->
<rect class="y" x="292.500" y="820.500" width="91" height="14"/><text x="297" y="832" textLength="83" lengthAdjust="spacingAndGlyphs">Zwischenspeicher</text>
<rect class="cb" x="307" y="835.500" width="12.500" height="8"/><path d="M312 836H314V843H312Z" fill="#00f"/>
<use href="#qq" x="453" y="812"/>
<rect class="y" x="295.500" y="880.500" width="160" height="14"/><text x="297" y="892" textLength="157" lengthAdjust="spacingAndGlyphs">Zwischenspeicher-Intervall [ms]:</text>
<use href="#qq" x="478" y="874"/>
<use href="#qd" x="579" y="874"/>
<use href="#b" x="633" y="874"/><path fill="none" stroke="#000" d="M643 902L650 878L657 902ZM646 891H654M650 878V896M636 884L646 890"/><path d="M637 880L643 886L641 889L636 884ZM652 880L656 900L660 900L655 880Z" fill="#000"/><path class="n" d="M640 902H659V905H640Z"/>
<use href="#qr" x="714" y="875"/>
<rect class="cb" x="1010.500" y="846.500" width="13" height="13"/><text x="1015.500" y="858" style="font:bold 12px 'Liberation Sans',sans-serif;fill:#00f">i</text>
<use href="#qq" x="1040" y="813"/>
<use href="#tri" x="1077" y="843"/><text x="1078.500" y="858" style="font:bold 10px 'Liberation Sans',sans-serif" textLength="12" lengthAdjust="spacingAndGlyphs">=0</text>
<use href="#stop" x="1111" y="847"/>
<use href="#qd" x="1110" y="812"/>
<rect class="ct" x="1162" y="807" width="66" height="13"/><path class="n" style="stroke:#008080" d="M1165.500 810.500H1169.500V813.500H1165.500ZM1167 814V818H1170"/><text x="1171" y="818" textLength="55" lengthAdjust="spacingAndGlyphs">C:\data.txt</text>
<rect class="w" x="1270.500" y="809.500" width="31" height="31"/><rect class="w" x="1272.500" y="811.500" width="27" height="11"/><text x="1274" y="821" textLength="24" lengthAdjust="spacingAndGlyphs" style="font:10px 'Liberation Sans',sans-serif">abc...</text><path class="n" d="M1276 824V832H1286M1283 830L1286 832L1283 834M1287.500 827.500H1299.500V839.500H1287.500ZM1290 833H1297V839H1290ZM1290 828H1297V831H1290Z"/><text x="1272" y="840" style="font:9px 'Liberation Sans',sans-serif">+?</text>
<use href="#bt" x="1225" y="829"/>
<use href="#bf" x="1344" y="851"/><use href="#stop" x="1391" y="852"/>
<rect class="w" x="1447.500" y="820.500" width="31" height="31"/><text x="1449" y="833" style="font:bold 11px 'Liberation Sans',sans-serif" textLength="9" lengthAdjust="spacingAndGlyphs">?!</text><text x="1449" y="849" style="font:bold 11px 'Liberation Sans',sans-serif" textLength="9" lengthAdjust="spacingAndGlyphs">?!</text><text x="1468" y="841" style="font:bold 11px 'Liberation Sans',sans-serif" textLength="9" lengthAdjust="spacingAndGlyphs">?!</text><path fill="none" stroke="#000" stroke-width="2" d="M1459 824L1467 832M1463 832H1467V828M1459 848L1467 840M1463 840H1467V844"/>
<rect class="w" x="1440.500" y="857.500" width="45" height="14"/><text x="1442" y="869" textLength="42" lengthAdjust="spacingAndGlyphs">error out</text>
<g transform="translate(1440 873)"><use href="#cl"/></g>

<!-- Schleife panels -->
<rect class="y" x="1501.500" y="-2" width="58" height="65"/><text x="1503.500" y="61" textLength="45" lengthAdjust="spacingAndGlyphs">Schleife 1</text>
<rect class="y" x="1501.500" y="78.500" width="58" height="698"/><text x="1503.500" y="90" textLength="45" lengthAdjust="spacingAndGlyphs">Schleife 2</text>
<rect class="y" x="1502.500" y="789.500" width="57" height="125"/><text x="1504" y="801" textLength="45" lengthAdjust="spacingAndGlyphs">Schleife 3</text>

<!-- scrollbar -->
<rect x="1661" y="0" width="13" height="926" fill="url(#sb)"/>
<rect x="1661" y="0" width="13" height="15" fill="#ece9d8"/><path d="M1663 10H1672L1667.500 5Z" fill="#000"/>
<rect x="1661" y="58" width="13" height="106" fill="#ece9d8"/><rect x="1661" y="164" width="13" height="1" fill="#000"/>
<rect x="1661" y="914" width="13" height="12" fill="#ece9d8"/><path d="M1663 919H1672L1667.500 924Z" fill="#000"/>
</svg>
</body></html>
